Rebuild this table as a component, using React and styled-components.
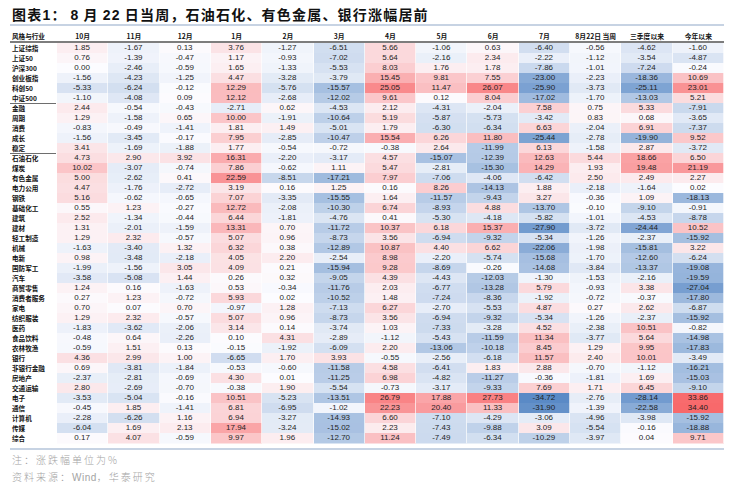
import styled, { createGlobalStyle } from "styled-components";

const GlobalStyle = createGlobalStyle`
  body {
    margin: 0;
    background: #ffffff;
  }
`;

const COLUMNS = [
  "10月",
  "11月",
  "12月",
  "1月",
  "2月",
  "3月",
  "4月",
  "5月",
  "6月",
  "7月",
  "8月22日 当周",
  "三季度以来",
  "今年以来",
];

// [name, values, ends a group]
const ROWS = [
  ["上证综指", [1.85, -1.67, 0.13, 3.76, -1.27, -6.51, 5.66, -1.06, 0.63, -6.4, -0.56, -4.62, -1.6]],
  ["上证50", [0.76, -1.39, -0.47, 1.17, -0.93, -7.02, 5.64, -2.16, 2.34, -2.22, -1.12, -3.54, -4.87]],
  ["沪深300", [0.0, -2.46, -0.59, 1.65, -1.33, -5.53, 8.03, 1.76, 1.78, -7.86, -1.01, -7.24, -0.24]],
  ["创业板指", [-1.56, -4.23, -1.25, 4.47, -3.28, -3.79, 15.45, 9.81, 7.55, -23.0, -2.23, -18.36, 10.69]],
  ["科创50", [-5.33, -6.24, -0.12, 12.29, -5.76, -15.57, 25.05, 11.47, 26.07, -25.9, -3.73, -25.11, 23.01]],
  ["中证500", [-1.1, -4.08, 0.09, 12.12, -2.68, -12.02, 9.61, 0.12, 8.04, -17.02, -1.7, -13.03, 5.21], true],
  ["金融", [2.44, -0.54, -0.43, -2.71, 0.62, -4.53, 2.12, -4.31, -2.04, 7.58, 0.75, 5.33, -7.91]],
  ["周期", [1.29, -1.58, 0.65, 10.0, -1.91, -10.64, 5.19, -5.87, -5.73, -3.42, 0.83, 0.68, -3.65]],
  ["消费", [-0.83, -0.49, -1.41, 1.81, 1.49, -5.01, 1.79, -6.3, -6.34, 6.63, -2.04, 6.91, -7.37]],
  ["成长", [-1.56, -3.45, -0.17, 7.95, -2.85, -10.47, 15.54, 6.26, 11.8, -25.44, -2.78, -19.9, 9.52]],
  ["稳定", [3.41, -1.69, -1.88, 1.77, -0.54, -0.72, -0.38, 2.64, -11.99, 6.13, -1.58, 2.87, -3.72], true],
  ["石油石化", [4.73, 2.9, 3.92, 16.31, -2.2, -3.17, 4.57, -15.07, -12.39, 12.63, 5.44, 18.66, 6.5]],
  ["煤炭", [10.02, -3.07, -0.74, 7.86, -0.62, 1.11, 5.47, -2.81, -15.3, 14.29, 1.93, 19.48, 21.19]],
  ["有色金属", [5.0, -2.62, 0.41, 22.59, -8.51, -17.21, 7.97, -7.06, -4.06, -6.42, 2.5, 2.49, 2.27]],
  ["电力公用", [4.47, -1.76, -2.72, 3.19, 0.16, 1.25, 0.16, 8.26, -14.13, 1.88, -2.18, -1.64, 0.02]],
  ["钢铁", [5.16, -0.62, -0.65, 7.07, -3.35, -15.55, 1.64, -11.57, -9.43, 3.27, -0.36, 1.09, -18.13]],
  ["基础化工", [0.55, 1.23, -0.27, 12.72, -2.08, -10.3, 6.74, -8.93, 4.88, -13.7, -0.1, -9.1, -0.91]],
  ["建筑", [2.52, -1.34, -0.44, 6.44, -1.81, -4.76, 0.41, -5.3, -4.18, -5.82, -1.01, -4.53, -8.78]],
  ["建材", [1.31, -2.01, -1.59, 13.31, 0.7, -11.72, 10.37, 6.18, 15.37, -27.9, -3.72, -24.44, 10.52]],
  ["轻工制造", [1.29, 2.32, -0.57, 5.07, 0.96, -8.73, 3.56, -6.94, -9.32, -5.34, -1.26, -2.37, -15.92]],
  ["机械", [-1.63, -3.4, 1.32, 6.32, 0.38, -12.89, 10.87, 4.4, 6.62, -22.06, -1.98, -15.81, 3.22]],
  ["电新", [0.98, -3.48, -2.18, 4.05, 2.2, -2.54, 8.98, -2.2, -5.74, -15.68, -1.7, -12.6, -6.24]],
  ["国防军工", [-1.99, -1.56, 3.05, 4.09, 0.21, -15.94, 9.28, -8.69, -0.26, -14.68, -3.84, -13.37, -19.08]],
  ["汽车", [-3.58, -5.08, 1.44, 0.26, 0.32, -9.05, 4.39, -4.43, -12.03, -1.3, -1.53, -2.16, -19.59]],
  ["商贸零售", [1.24, 0.16, -1.63, 0.53, -0.34, -11.76, 2.03, -6.77, -13.28, 5.79, -0.93, 3.38, -27.04]],
  ["消费者服务", [0.27, 1.23, -0.72, 5.93, 0.02, -10.52, 1.48, -7.24, -8.36, -1.92, -0.72, -0.37, -17.8]],
  ["家电", [0.7, 0.07, 0.7, -0.97, 1.28, -7.13, 6.27, -2.7, -5.53, 4.87, 0.27, 2.62, -6.87]],
  ["纺织服装", [1.29, 2.32, -0.57, 5.07, 0.96, -8.73, 3.56, -6.94, -9.32, -5.34, -1.26, -2.37, -15.92]],
  ["医药", [-1.83, -3.62, -2.06, 3.14, 0.14, -3.74, 1.03, -7.33, -3.28, 4.52, -2.38, 10.51, -0.82]],
  ["食品饮料", [-0.48, 0.64, -2.26, 0.1, 4.31, -2.89, -1.12, -5.43, -11.59, 11.34, -3.77, 5.64, -14.98]],
  ["农林牧渔", [-0.59, 1.51, 0.13, -0.15, -1.92, -6.09, 2.2, -13.06, -10.18, 8.45, 1.29, 9.95, -17.83]],
  ["银行", [4.36, 2.99, 1.0, -6.65, 1.7, 3.93, -0.55, -2.56, -6.18, 11.57, 2.4, 10.01, -3.49]],
  ["非银行金融", [0.69, -3.81, -1.84, -0.53, -0.6, -11.58, 4.58, -6.41, 1.83, 2.88, -0.7, -1.12, -16.21]],
  ["房地产", [-2.37, -2.81, -0.69, 4.3, 0.01, -11.25, 6.98, -4.82, -11.27, -0.36, -1.81, 1.69, -15.03]],
  ["交通运输", [2.8, -2.69, -0.7, -0.38, 1.9, -5.54, -0.73, -3.17, -9.33, 7.69, 1.71, 6.45, -9.1]],
  ["电子", [-3.53, -5.04, -0.16, 10.51, -5.23, -13.51, 26.79, 17.88, 27.73, -34.72, -2.76, -28.14, 33.86]],
  ["通信", [-0.45, 1.85, -1.41, 6.81, -6.95, -1.02, 22.23, 20.4, 11.33, -31.9, -1.39, -22.58, 34.4]],
  ["计算机", [-2.28, -6.26, 1.16, 6.94, -3.27, -14.93, 6.6, -7.1, -4.29, -3.06, -4.96, -3.98, -15.92]],
  ["传媒", [-6.04, 1.69, 2.13, 17.94, -3.24, -15.02, 2.23, -7.43, -9.88, 3.09, -5.54, -0.16, -18.88]],
  ["综合", [0.17, 4.07, -0.59, 9.97, 1.96, -12.7, 11.24, -7.49, -6.34, -10.29, -3.97, 0.04, 9.71]],
];

const WHITE = [252, 252, 255];
const RED = [248, 105, 107];
const BLUE = [90, 138, 198];

function heat(v) {
  const t = Math.min(1, Math.pow(Math.abs(v) / 34.5, 0.8));
  const end = v >= 0 ? RED : BLUE;
  const c = WHITE.map((w, i) => Math.round(w + (end[i] - w) * t));
  return `rgb(${c[0]}, ${c[1]}, ${c[2]})`;
}

export default function App() {
  return (
    <>
      <GlobalStyle />
      <Page>
        <Title>
          图表1：<Latin>8</Latin>月<Latin>22</Latin>日当周，石油石化、有色金属、银行涨幅居前
        </Title>
        <SoftRule />
        <Table>
          <HeadRow>
            <HeadLabel>风格与行业</HeadLabel>
            {COLUMNS.map((c) => (
              <HeadCell key={c}>{c}</HeadCell>
            ))}
          </HeadRow>
          {ROWS.map(([name, values, groupEnd]) => (
            <Row key={name}>
              <Label $groupEnd={groupEnd}>{name}</Label>
              {values.map((v, i) => (
                <Cell key={i} style={{ background: heat(v) }}>
                  {v.toFixed(2)}
                </Cell>
              ))}
            </Row>
          ))}
        </Table>
        <SoftRule $gap={5} />
        <Note>注：涨跌幅单位为%</Note>
        <Note>
          资料来源：<NoteLatin>Wind</NoteLatin>，华泰研究
        </Note>
      </Page>
    </>
  );
}

const Page = styled.div`
  width: 714px;
  padding: 7px 0 0 10px;
  display: flex;
  flex-direction: column;
`;

const Title = styled.div`
  height: 17px;
  line-height: 17px;
  padding-left: 2px;
  font-family: "Liberation Sans", "Noto Sans CJK SC", sans-serif;
  font-size: 14px;
  font-weight: 700;
  letter-spacing: 1.2px;
  color: #111111;
  white-space: nowrap;
`;

const Latin = styled.span`
  margin: 0 4px;
`;

const SoftRule = styled.div`
  height: 2px;
  margin-top: ${(p) => p.$gap || 0}px;
  background: #c7d3e3;
`;

const Table = styled.div`
  display: flex;
  flex-direction: column;
`;

const grid = `
  display: grid;
  grid-template-columns: 47px repeat(13, 1fr);
`;

const HeadRow = styled.div`
  ${grid}
  height: 15px;
  align-items: end;
  border-bottom: 2px solid #7d7d7d;
  font-family: "Noto Sans CJK SC", sans-serif;
  font-weight: 700;
  color: #111111;
  line-height: 10px;
`;

const HeadLabel = styled.div`
  padding-left: 2px;
  font-size: 6.6px;
  white-space: nowrap;
`;

const HeadCell = styled.div`
  text-align: center;
  font-size: 6.8px;
  white-space: nowrap;
`;

const Row = styled.div`
  ${grid}
  height: 10px;
`;

const Label = styled.div`
  padding-left: 2px;
  margin-right: 1px;
  font-family: "Noto Sans CJK SC", sans-serif;
  font-size: 6.6px;
  font-weight: 700;
  line-height: 10px;
  color: #111111;
  white-space: nowrap;
  box-sizing: border-box;
  border-bottom: ${(p) => (p.$groupEnd ? "1.5px solid #6e6e6e" : "none")};
`;

const Cell = styled.div`
  box-sizing: border-box;
  border-right: 1px solid rgba(255, 255, 255, 0.7);
  border-bottom: 1px solid rgba(255, 255, 255, 0.5);
  text-align: center;
  font-family: "Liberation Sans Narrow", "Liberation Sans", sans-serif;
  font-size: 8px;
  line-height: 10px;
  color: #1e1e1e;
`;

const Note = styled.div`
  margin-top: 2px;
  padding-left: 2px;
  height: 15px;
  line-height: 15px;
  font-family: "Noto Sans CJK SC", sans-serif;
  font-size: 10px;
  font-weight: 300;
  letter-spacing: 2px;
  color: #a3a3a3;
  &:first-of-type {
    margin-top: 4px;
  }
`;

const NoteLatin = styled.span`
  font-family: "Liberation Sans", sans-serif;
  letter-spacing: 0.5px;
`;
